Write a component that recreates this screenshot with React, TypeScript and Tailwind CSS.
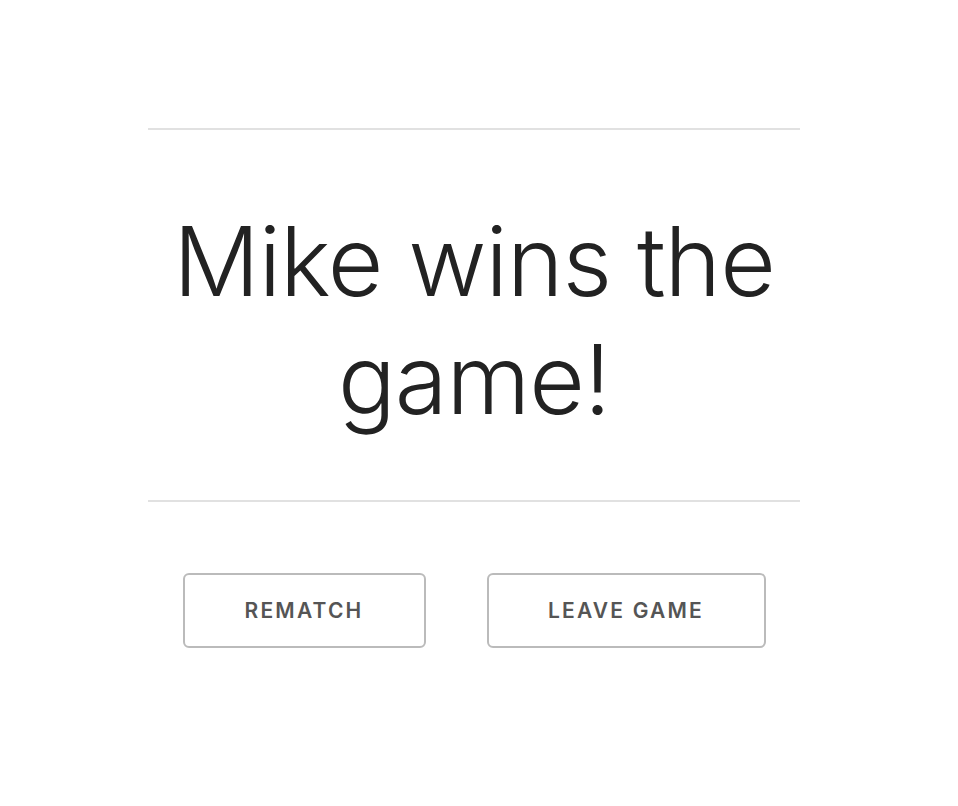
export default function App() {
  return (
    <div className="min-h-[806px] w-full bg-white" style={{ fontFamily: 'Inter, "Open Sans", sans-serif' }}>
      <div className="ml-[148px] w-[652px] pt-[128px]">
        <hr className="border-0 border-t-2 border-[#e1e1e1]" />
        <h1 className="mt-[72px] mb-[62px] text-center text-[96px] font-light leading-[118px] tracking-[-1px] text-[#222]">
          Mike wins the game!
        </h1>
        <hr className="border-0 border-t-2 border-[#e1e1e1]" />
        <div className="mt-[71px] flex justify-center gap-[61px]">
          <button className="h-[75px] w-[243px] rounded-[6px] border-2 border-[#bbb] bg-white text-[21px] font-semibold uppercase tracking-[2.2px] text-[#555]">
            Rematch
          </button>
          <button className="h-[75px] w-[279px] rounded-[6px] border-2 border-[#bbb] bg-white text-[21px] font-semibold uppercase tracking-[2.2px] text-[#555]">
            Leave game
          </button>
        </div>
      </div>
    </div>
  );
}
